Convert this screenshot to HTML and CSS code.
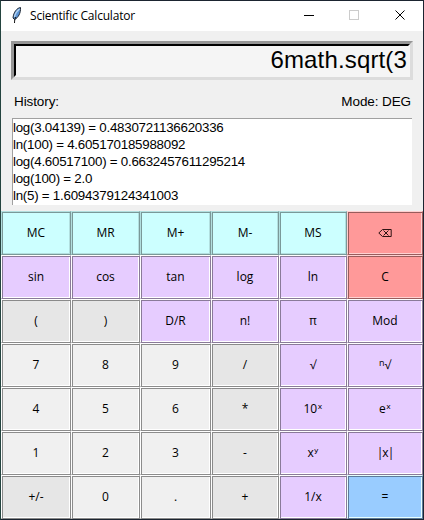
FILE: index.html
```html
<!DOCTYPE html>
<html lang="en">
<head>
<meta charset="utf-8">
<title>Scientific Calculator</title>
<link rel="stylesheet" href="styles.css">
</head>
<body>
<main class="window">
  <header class="titlebar">
    <svg class="feather" width="10" height="17" viewBox="0 0 10 17">
      <path d="M8.500.5C5 1 1.500 5 1 11l1.500 1.500C6 11 9 6 8.500.5Z" fill="#5b94d6" stroke="#222a36" stroke-width="1"/>
      <path d="M7.500 2C5 4 3 7 2.500 10" stroke="#b9d6f2" stroke-width="1.200" fill="none"/>
      <path d="M3.500 10C3 12 2.500 13 2.500 16" stroke="#101010" stroke-width="1" fill="none"/>
    </svg>
    <h1 class="title">Scientific Calculator</h1>
    <svg class="controls" width="134" height="30" viewBox="0 0 134 30" fill="none" shape-rendering="crispEdges">
      <path d="M15 14.5h10" stroke="#000"/>
      <rect x="60.5" y="9.5" width="9" height="9" stroke="#ccc"/>
      <path d="M106.5 9.500l9 9M115.500 9.500l-9 9" stroke="#000" shape-rendering="auto"/>
    </svg>
  </header>
  <section class="display"><div class="entry">6math.sqrt(3</div></section>
  <div class="labels"><span class="history-label">History:</span><span class="mode">Mode: DEG</span></div>
  <ul class="history">
    <li>log(3.04139) = 0.4830721136620336</li>
    <li>ln(100) = 4.605170185988092</li>
    <li>log(4.60517100) = 0.6632457611295214</li>
    <li>log(100) = 2.0</li>
    <li>ln(5) = 1.6094379124341003</li>
  </ul>
  <section class="keys">
    <button class="mem">MC</button><button class="mem">MR</button><button class="mem">M+</button><button class="mem">M-</button><button class="mem">MS</button><button class="clear"><svg width="14" height="10" viewBox="0 0 14 10" fill="none" stroke="#301414"><path d="M.8 5l3.700-3.500h8.700v7H4.500zM5.500 2.500l5 5M10.500 2.500l-5 5"/></svg></button>
    <button class="fn">sin</button><button class="fn">cos</button><button class="fn">tan</button><button class="fn">log</button><button class="fn">ln</button><button class="clear">C</button>
    <button class="op">(</button><button class="op">)</button><button class="fn">D/R</button><button class="fn">n!</button><button class="fn">π</button><button class="fn">Mod</button>
    <button>7</button><button>8</button><button>9</button><button class="op">/</button><button class="fn">√</button><button class="fn"><span class="index">n</span>√</button>
    <button>4</button><button>5</button><button>6</button><button class="op">*</button><button class="fn">10ˣ</button><button class="fn">eˣ</button>
    <button>1</button><button>2</button><button>3</button><button class="op">-</button><button class="fn">xʸ</button><button class="fn abs">|x|</button>
    <button class="op">+/-</button><button>0</button><button>.</button><button class="op">+</button><button class="fn">1/x</button><button class="equals">=</button>
  </section>
</main>
</body>
</html>
```
FILE: styles.css
```css
* { box-sizing: border-box; }
body { margin: 0; }
.window {
  width: 424px;
  height: 520px;
  border: 1px solid #1b2430;
  border-left-color: #24443f;
  background: #f0f0f0;
  color: #000;
  font-family: "Liberation Sans", Arial, sans-serif;
  overflow: hidden;
}
.titlebar {
  height: 30px;
  display: flex;
  align-items: center;
  background: #fff;
  padding-left: 11px;
}
.feather { margin-top: -2px; }
.title {
  margin: 0 auto 0 8px;
  font: 400 12px/16px "Open Sans", sans-serif;
  letter-spacing: -0.2px;
}
.controls { flex: none; }
.display {
  margin: 10px 10px 0;
  height: 39px;
  border: 3px solid;
  border-color: #969696 #dcdcdc #dcdcdc #969696;
}
.entry {
  height: 33px;
  border: 2px solid;
  border-color: #000 #f5f5f5 #f5f5f5 #000;
  background: #f5f5f5;
  font-size: 24px;
  line-height: 28px;
  letter-spacing: 0.15px;
  text-align: right;
  padding-right: 1px;
}
.labels {
  display: flex;
  justify-content: space-between;
  height: 38px;
  padding: 13px 12px 0 13px;
  font-size: 13.5px;
  line-height: 17px;
  letter-spacing: -0.1px;
}
.history {
  list-style: none;
  margin: 0 11px;
  padding: 0;
  height: 87px;
  border-top: 1px solid #a0a0a0;
  border-left: 1px solid #a0a0a0;
  background: #fff;
  font-size: 13.33px;
  line-height: 17px;
  letter-spacing: -0.25px;
}
.keys {
  margin-top: 6px;
  display: grid;
  grid-template-columns: 70px 69px 71px 68px 68px 76px;
  grid-auto-rows: 44px;
}
.keys button {
  --face: #f0f0f0;
  --light: #fff;
  --dark: #8c8c8c;
  display: flex;
  align-items: center;
  justify-content: center;
  padding: 0;
  margin: 0;
  color: #000;
  border: 1px solid;
  border-color: var(--light) var(--dark) var(--dark) var(--light);
  box-shadow: inset 1px 1px var(--dark), inset -1px -1px var(--light);
  background: var(--face);
  font: 12px/16px "Open Sans", "DejaVu Sans", sans-serif;
}
.keys .mem { --face: #cff; --light: #b2dfdf; --dark: #7a9999; }
.keys .fn { --face: #e6ccff; --dark: #8a7a99; }
.keys .op { --face: #e6e6e6; --dark: #8a8a8a; }
.keys .clear { --face: #f99; --light: #ffd0d0; --dark: #995c5c; }
.keys .equals { --face: #9cf; --light: #e6ffff; --dark: #5c7a99; }
.keys .abs { letter-spacing: -1px; }
.index { font-size: 9px; margin-top: -5px; }
```
